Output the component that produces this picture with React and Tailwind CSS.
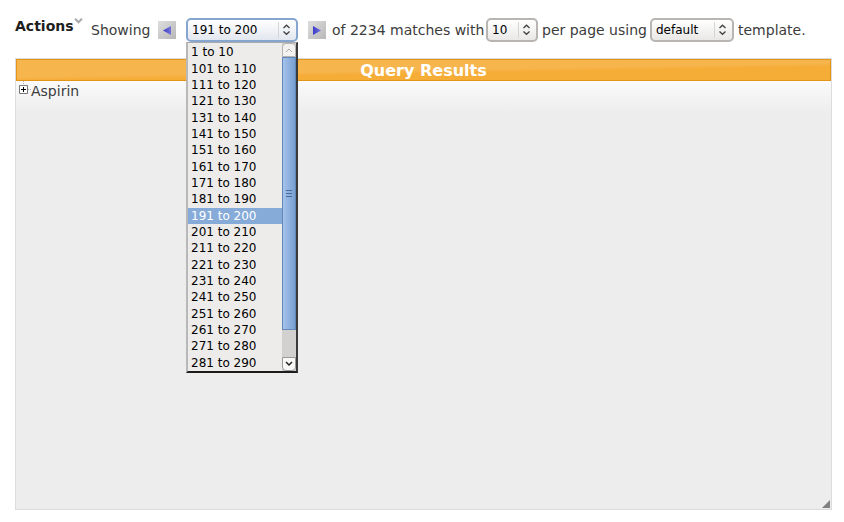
import React from "react";

const ranges = [
  "1 to 10",
  ...Array.from({ length: 19 }, (_, i) => `${101 + i * 10} to ${110 + i * 10}`),
];

function SelectArrows() {
  return (
    <span className="pointer-events-none absolute inset-y-1 right-1 flex w-4 items-center justify-center border-l border-[#d5d5d5]">
      <svg width="9" height="12" viewBox="0 0 9 12" fill="none" stroke="#444" strokeWidth="1.4" aria-hidden="true">
        <path d="M1.5 4 4.5 1.3 7.5 4M1.5 7.5 4.5 10.2 7.5 7.5" />
      </svg>
    </span>
  );
}

function StepButton({ label, children }) {
  return (
    <button
      type="button"
      aria-label={label}
      className="flex size-[18px] shrink-0 items-center justify-center bg-linear-to-br from-[#dedede] to-[#b8b8b8]"
    >
      <svg width="8" height="9" viewBox="0 0 8 9" aria-hidden="true">
        <defs>
          <linearGradient id={label}>
            <stop offset="0" stopColor="#3c3ccb" />
            <stop offset="1" stopColor="#7373d8" />
          </linearGradient>
        </defs>
        <g fill={`url(#${label})`}>{children}</g>
      </svg>
    </button>
  );
}

function RangeMenu() {
  return (
    <div className="absolute top-6 left-0 z-10 flex h-[331px] w-28 border-t border-r-2 border-b-2 border-l-2 border-t-[#aaa] border-r-[#3a3a3a] border-b-[#1c1c1c] border-l-[#b8b8b8] bg-[#edecea]">
      <ul role="listbox" aria-label="Result range" className="grid flex-1 grid-rows-20 pt-px text-xs text-black">
        {ranges.map((r) => (
          <li
            key={r}
            role="option"
            aria-selected={r === "191 to 200"}
            className={
              r === "191 to 200"
                ? "flex items-center bg-[#86abd9] pl-[3px] whitespace-nowrap text-white"
                : "flex items-center pl-[3px] whitespace-nowrap"
            }
          >
            {r}
          </li>
        ))}
      </ul>
      <div className="flex w-3.5 flex-col bg-[#d3d1cf]">
        <button type="button" aria-label="Scroll up" className="flex h-3.5 items-center justify-center rounded-t-sm border border-[#b5b3b0] bg-[#f3f2f1]">
          <svg width="8" height="6" viewBox="0 0 8 6" fill="none" stroke="#aaa" aria-hidden="true">
            <path d="M1 5 4 2 7 5" />
          </svg>
        </button>
        <div className="flex h-[273px] flex-col items-center justify-center gap-0.5 border border-[#6288ba] bg-linear-to-r from-[#a5c3ea] to-[#789fd1]">
          <span className="h-px w-1.5 bg-[#456b9e]" />
          <span className="h-px w-1.5 bg-[#456b9e]" />
          <span className="h-px w-1.5 bg-[#456b9e]" />
        </div>
        <div className="flex-1" />
        <button type="button" aria-label="Scroll down" className="flex h-3.5 items-center justify-center rounded-b-sm border border-[#999] bg-[#f8f8f7]">
          <svg width="8" height="6" viewBox="0 0 8 6" fill="none" stroke="#222" strokeWidth="1.5" aria-hidden="true">
            <path d="M1 1 4 4 7 1" />
          </svg>
        </button>
      </div>
    </div>
  );
}

export default function App() {
  return (
    <div className="flex min-h-screen flex-col bg-white pt-[18px] pr-3 pb-3 pl-[15px] font-['DejaVu_Sans',sans-serif] text-sm text-[#3c3c3c]">
      <div className="flex h-6 items-center whitespace-nowrap">
        <button type="button" className="mr-2.5 flex h-6 w-[66px] shrink-0 items-start font-bold text-[#1e1e1e]">
          <span className="leading-4">Actions</span>
          <svg width="9" height="6" viewBox="0 0 10 7" fill="none" stroke="#aaa" strokeWidth="2.5" className="shrink-0" aria-hidden="true">
            <path d="M1 1 5 5 9 1" />
          </svg>
        </button>
        <span className="w-[67px] shrink-0">Showing</span>
        <StepButton label="Previous">
          <path d="M8 0V9L0 4.5Z" />
        </StepButton>
        <div className="relative ml-2.5 h-6 w-28 shrink-0">
          <select
            aria-label="Result range"
            defaultValue="191 to 200"
            className="h-6 w-full appearance-none rounded-[5px] border-2 border-[#86a6d0] bg-linear-to-b from-white to-[#e2e7ef] pl-1 text-xs text-black"
          >
            {ranges.map((r) => (
              <option key={r}>{r}</option>
            ))}
          </select>
          <SelectArrows />
          <RangeMenu />
        </div>
        <span className="w-2.5 shrink-0" />
        <StepButton label="Next">
          <path d="M0 0V9L8 4.5Z" />
        </StepButton>
        <span className="w-[160px] shrink-0 pl-1.5">of 2234 matches with</span>
        <div className="relative h-6 w-[52px] shrink-0">
          <select
            aria-label="Results per page"
            className="h-6 w-full appearance-none rounded-[5px] border-2 border-[#b8b5b2] bg-linear-to-b from-white to-[#e9e8e6] pl-1 text-xs text-black"
          >
            <option>10</option>
          </select>
          <SelectArrows />
        </div>
        <span className="w-[112px] shrink-0 pl-1">per page using</span>
        <div className="relative h-6 w-[84px] shrink-0">
          <select
            aria-label="Template"
            className="h-6 w-full appearance-none rounded-[5px] border-2 border-[#b8b5b2] bg-linear-to-b from-white to-[#e9e8e6] pl-1 text-xs text-black"
          >
            <option>default</option>
          </select>
          <SelectArrows />
        </div>
        <span className="pl-1">template.</span>
      </div>

      <section className="relative mt-4 flex flex-1 flex-col border border-[#dcdcdc] bg-[#ededed]">
        <h1 className="h-[22px] border border-[#e5941a] bg-linear-[179deg] from-[#f7b54e] from-50% to-[#f6ad38] to-60% text-center text-base leading-[22px] font-bold text-white">
          Query Results
        </h1>
        <div className="flex h-8 items-start bg-linear-to-b from-[#fafafa] to-[#ededed] pl-[3px]">
          <button type="button" aria-label="Expand Aspirin" className="shrink-0">
            <svg width="12" height="16" viewBox="0 0 12 16" fill="none" aria-hidden="true">
              <path d="M4.5 0V4M9 8.5H12" stroke="#aaa" strokeDasharray="1 1" />
              <path d="M.5 4.5H8.5V12.5H.5Z" fill="#fff" stroke="#777" />
              <path d="M2 8.5H7M4.5 6V11" stroke="#000" />
            </svg>
          </button>
          <span className="leading-5">Aspirin</span>
        </div>
        <svg width="8" height="8" viewBox="0 0 8 8" className="absolute right-px bottom-px" aria-hidden="true">
          <path d="M8 0V8H0Z" fill="#808080" />
        </svg>
      </section>
    </div>
  );
}
